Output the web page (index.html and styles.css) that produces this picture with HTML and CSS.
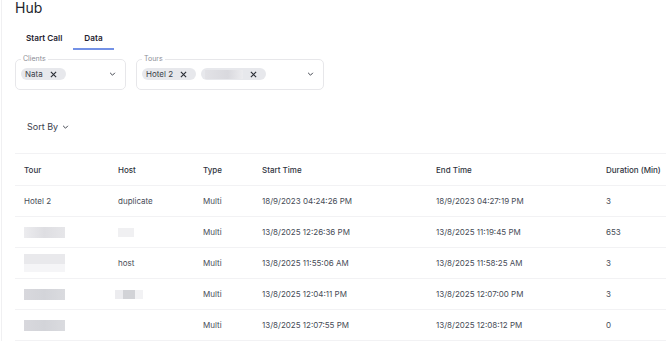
FILE: index.html
```html
<!DOCTYPE html>
<html lang="en">
<head>
    <meta charset="UTF-8">
    <meta name="viewport" content="width=device-width, initial-scale=1.0">
    <title>Hub</title>
    <link rel="stylesheet" href="styles.css">
</head>
<body>

<div class="app">
    <h1 class="title">Hub</h1>

    <div class="tabs">
        <button class="tab">Start Call</button>
        <button class="tab active">Data</button>
    </div>

    <div class="filters">
        <fieldset class="filter clients">
            <legend>Clients</legend>
            <div class="chips">
                <span class="chip">Nata
                    <svg class="chip-x" viewBox="0 0 8 8"><path d="M1 1L7 7M7 1L1 7"/></svg>
                </span>
            </div>
            <svg class="chevron" viewBox="0 0 8 5"><path d="M1 1L4 4L7 1"/></svg>
        </fieldset>
        <fieldset class="filter tours">
            <legend>Tours</legend>
            <div class="chips">
                <span class="chip">Hotel 2
                    <svg class="chip-x" viewBox="0 0 8 8"><path d="M1 1L7 7M7 1L1 7"/></svg>
                </span>
                <span class="chip">
                    <span class="blur chip-blur"></span>
                    <svg class="chip-x" viewBox="0 0 8 8"><path d="M1 1L7 7M7 1L1 7"/></svg>
                </span>
            </div>
            <svg class="chevron" viewBox="0 0 8 5"><path d="M1 1L4 4L7 1"/></svg>
        </fieldset>
    </div>

    <button class="sort">Sort By
        <svg class="chevron" viewBox="0 0 8 5"><path d="M1 1L4 4L7 1"/></svg>
    </button>

    <table class="sessions">
        <thead>
            <tr>
                <th class="col-tour">Tour</th>
                <th class="col-host">Host</th>
                <th class="col-type">Type</th>
                <th class="col-start">Start Time</th>
                <th class="col-end">End Time</th>
                <th class="col-dur">Duration (Min)</th>
            </tr>
        </thead>
        <tbody>
            <tr>
                <td>Hotel 2</td>
                <td>duplicate</td>
                <td>Multi</td>
                <td>18/9/2023 04:24:26 PM</td>
                <td>18/9/2023 04:27:19 PM</td>
                <td>3</td>
            </tr>
            <tr>
                <td><span class="blur blur-tour b1"></span></td>
                <td><span class="blur blur-host h1"></span></td>
                <td>Multi</td>
                <td>13/8/2025 12:26:36 PM</td>
                <td>13/8/2025 11:19:45 PM</td>
                <td>653</td>
            </tr>
            <tr>
                <td><span class="blur blur-tour b2"></span></td>
                <td>host</td>
                <td>Multi</td>
                <td>13/8/2025 11:55:06 AM</td>
                <td>13/8/2025 11:58:25 AM</td>
                <td>3</td>
            </tr>
            <tr>
                <td><span class="blur blur-tour b3"></span></td>
                <td><span class="blur blur-host h2"></span></td>
                <td>Multi</td>
                <td>13/8/2025 12:04:11 PM</td>
                <td>13/8/2025 12:07:00 PM</td>
                <td>3</td>
            </tr>
            <tr>
                <td><span class="blur blur-tour b3"></span></td>
                <td></td>
                <td>Multi</td>
                <td>13/8/2025 12:07:55 PM</td>
                <td>13/8/2025 12:08:12 PM</td>
                <td>0</td>
            </tr>
        </tbody>
    </table>
</div>

</body>
</html>
```

FILE: styles.css
```css
html {
    overflow: hidden;
}
body {
    margin: 0;
    font-family: Inter, "Noto Sans", sans-serif;
    color: #2d313b;
    background-color: white;
}
.app {
    margin-left: 1px;
    border-left: 1px solid #f0f0f2;
    padding-left: 13px;
    min-height: 341px;
    box-sizing: border-box;
}
.title {
    margin: 0;
    font-size: 14px;
    font-weight: 400;
    line-height: 16px;
    color: #22252d;
}
.tabs {
    display: flex;
    margin-top: 13px;
}
.tab {
    font-family: inherit;
    font-size: 8.2px;
    font-weight: 600;
    line-height: 10px;
    color: #1f2330;
    background: none;
    border: none;
    border-bottom: 2px solid transparent;
    padding: 4px 11px 5px;
    cursor: pointer;
}
.tab.active {
    border-bottom-color: #7391e6;
}
.filters {
    display: flex;
    gap: 10px;
    margin-top: 5px;
}
.filter {
    display: flex;
    align-items: center;
    margin: 0;
    border: 1px solid #e7e7ea;
    border-radius: 5px;
    padding: 5px 9px 9px 5px;
    box-sizing: border-box;
}
.filter legend {
    font-size: 7px;
    line-height: 8px;
    color: #8b8e96;
    padding: 0 2px;
}
.clients {
    width: 111px;
}
.tours {
    width: 188px;
}
.chips {
    display: flex;
    gap: 5px;
    flex: 1;
}
.chip {
    display: inline-flex;
    align-items: center;
    height: 12px;
    padding: 0 9px 0 4px;
    border-radius: 6px;
    background-color: #e7e8ec;
    font-size: 8px;
    color: #3a3e48;
}
.chip-x {
    width: 7px;
    height: 7px;
    margin-left: 7px;
    fill: none;
    stroke: #2a2d35;
    stroke-width: 1.3;
}
.chevron {
    width: 7px;
    height: 4px;
    fill: none;
    stroke: #3a3e48;
    stroke-width: 1.2;
}
.blur {
    display: inline-block;
    filter: blur(0.6px);
}
.chip-blur {
    width: 38px;
    height: 9px;
    background: linear-gradient(90deg, #e2e2e6, #d9d9de 60%, #ececef);
}
.sort {
    display: flex;
    align-items: center;
    gap: 4px;
    margin-top: 31px;
    margin-left: 12px;
    padding: 0;
    border: none;
    background: none;
    font-family: inherit;
    font-size: 9px;
    line-height: 11px;
    color: #3b404c;
    cursor: pointer;
}
.sessions {
    margin-top: 21px;
    width: 651px;
    border-collapse: collapse;
    border-top: 1px solid #f2f2f4;
    table-layout: fixed;
}
.sessions th,
.sessions td {
    text-align: left;
    padding: 0 0 0 9px;
    font-size: 8px;
    white-space: nowrap;
    border-bottom: 1px solid #f2f2f4;
}
.sessions th {
    height: 31px;
    font-weight: 500;
    color: #30343e;
}
.sessions td {
    height: 30px;
    color: #474c57;
}
/* widths are content widths, the 9px padding comes on top */
.col-tour { width: 85px; }
.col-host { width: 76px; }
.col-type { width: 50px; }
.col-start { width: 165px; }
.col-end { width: 161px; }
.col-dur { width: 60px; }
.blur-tour {
    width: 41px;
    height: 11px;
    vertical-align: middle;
}
.b1 {
    background: linear-gradient(90deg, #ececef, #dedee2 50%, #e6e6e9);
}
.b2 {
    height: 18px;
    background: linear-gradient(180deg, #e9e9ec 55%, #f5f5f7 55%);
}
.b3 {
    background: linear-gradient(90deg, #d8d8dd, #d3d4d9 50%, #dadbdf);
}
.blur-host {
    height: 9px;
    vertical-align: middle;
}
.h1 {
    width: 16px;
    background-color: #f0f0f2;
}
.h2 {
    width: 28px;
    margin-left: -3px;
    background: linear-gradient(90deg, #ececef 30%, #d2d3d7 30%, #d2d3d7 70%, #f2f2f4 70%);
}
```
